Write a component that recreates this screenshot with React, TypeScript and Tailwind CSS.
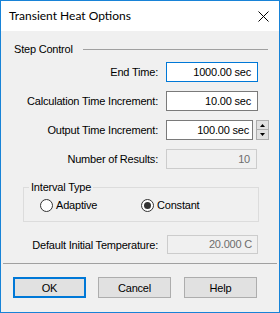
export default function App() {
  return (
    <div className="w-[280px] h-[313px] border border-[#1883d7] bg-[#f0f0f0] flex flex-col text-[11px] leading-[14px] tracking-[-0.2px] text-black font-['Liberation_Sans',sans-serif] overflow-hidden">
      <div className="h-[30px] shrink-0 bg-white flex items-center justify-between pl-[8px] pr-[10px]">
        <span className="text-[12px] tracking-normal font-['Lato',sans-serif]">Transient Heat Options</span>
        <svg width="11" height="11" viewBox="0 0 11 11" className="block">
          <path d="M0.5 0.5 L10.5 10.5 M10.5 0.5 L0.5 10.5" stroke="#000" strokeWidth="1" fill="none" />
        </svg>
      </div>

      <div className="mt-[10px] h-[16px] flex items-center pl-[13px] pr-[11px]">
        <span>Step Control</span>
        <div className="flex-1 h-px bg-[#a0a0a0] ml-[10px]" />
      </div>

      <div className="mt-[5px] h-[20px] flex items-center">
        <div className="w-[157px] text-right">End Time:</div>
        <div className="ml-[8px] w-[92px] h-[20px] border border-[#0078d7] bg-white text-right pr-[6px] leading-[18px]">1000.00 sec</div>
      </div>

      <div className="mt-[9px] h-[20px] flex items-center">
        <div className="w-[157px] text-right">Calculation Time Increment:</div>
        <div className="ml-[8px] w-[92px] h-[20px] border border-[#7a7a7a] bg-white text-right pr-[6px] leading-[18px]">10.00 sec</div>
      </div>

      <div className="mt-[9px] h-[20px] flex items-center">
        <div className="w-[157px] text-right">Output Time Increment:</div>
        <div className="ml-[8px] w-[87px] h-[20px] border border-[#7a7a7a] bg-white text-right pr-[3px] leading-[18px]">100.00 sec</div>
        <div className="ml-[3px] w-[13px] h-[20px] flex flex-col">
          <div className="h-[10px] border border-[#adadad] bg-[#e1e1e1] flex items-center justify-center">
            <svg width="5" height="3" viewBox="0 0 5 3"><path d="M2.5 0 L5 3 L0 3 Z" fill="#000" /></svg>
          </div>
          <div className="h-[10px] border border-t-0 border-[#adadad] bg-[#e1e1e1] flex items-center justify-center">
            <svg width="5" height="3" viewBox="0 0 5 3"><path d="M0 0 L5 0 L2.5 3 Z" fill="#000" /></svg>
          </div>
        </div>
      </div>

      <div className="mt-[9px] h-[20px] flex items-center">
        <div className="w-[157px] text-right">Number of Results:</div>
        <div className="ml-[8px] w-[91px] h-[20px] border border-[#cccccc] bg-[#f0f0f0] text-[#6d6d6d] text-right pr-[6px] leading-[18px]">10</div>
      </div>

      <fieldset className="mt-[11px] ml-[22px] w-[236px] border border-[#dcdcdc] pt-[4px] pb-[9px]">
        <legend className="ml-[5px] px-[2px]">Interval Type</legend>
        <div className="flex items-center h-[14px] pl-[16px]">
          <div className="w-[101px] flex items-center">
            <span className="w-[13px] h-[13px] rounded-full border border-[#333333] bg-white" />
            <span className="ml-[3px]">Adaptive</span>
          </div>
          <div className="flex items-center">
            <span className="w-[13px] h-[13px] rounded-full border border-[#333333] bg-white flex items-center justify-center">
              <span className="w-[7px] h-[7px] rounded-full bg-[#333333]" />
            </span>
            <span className="ml-[3px]">Constant</span>
          </div>
        </div>
      </fieldset>

      <div className="mt-[13px] h-[19px] flex items-center">
        <div className="w-[157px] text-right">Default Initial Temperature:</div>
        <div className="ml-[9px] w-[91px] h-[19px] border border-[#cccccc] bg-[#f0f0f0] text-[#6d6d6d] text-right pr-[5px] leading-[17px]">20.000 C</div>
      </div>

      <div className="mt-[9px] mx-[2px] h-px bg-[#a0a0a0]" />

      <div className="mt-[13px] flex pl-[12px]">
        <div className="w-[73px] h-[21px] border-2 border-[#0078d7] bg-[#e1e1e1] flex items-center justify-center">OK</div>
        <div className="ml-[12px] w-[73px] h-[21px] border border-[#adadad] bg-[#e1e1e1] flex items-center justify-center">Cancel</div>
        <div className="ml-[13px] w-[73px] h-[21px] border border-[#adadad] bg-[#e1e1e1] flex items-center justify-center">Help</div>
      </div>
    </div>
  );
}
